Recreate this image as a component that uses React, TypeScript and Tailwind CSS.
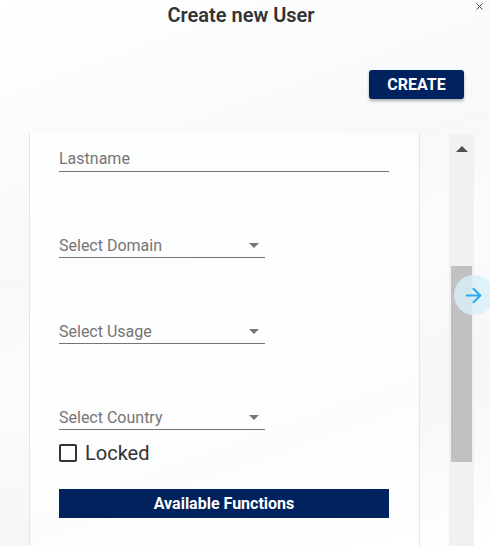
import { ArrowRight, X } from "lucide-react";

function SelectField({ label }: { label: string }) {
  return (
    <div className="w-[206px] h-[24px] border-b border-[#757575] flex items-center justify-between">
      <span className="text-[16px] text-[#757575]">{label}</span>
      <span className="mr-[6px] w-0 h-0 border-l-[5px] border-r-[5px] border-t-[5px] border-l-transparent border-r-transparent border-t-[#757575]" />
    </div>
  );
}

export default function App() {
  return (
    <div
      className="relative w-[490px] h-[546px] overflow-hidden bg-[linear-gradient(160deg,#ffffff_0%,#f6f8fa_40%,#fbfcfd_55%,#f4f6f8_75%,#ffffff_100%)]"
      style={{ fontFamily: "Roboto, 'Liberation Sans', sans-serif" }}
    >
      <button className="absolute right-[5px] top-[1px] text-[#333]">
        <X className="w-[11px] h-[11px]" strokeWidth={2} />
      </button>

      <div className="h-[29px] flex items-center justify-center">
        <h1 className="text-[20px] font-semibold text-[#333] mr-[8px]">Create new User</h1>
      </div>

      <div className="flex justify-end pr-[26px] pt-[41px]">
        <button className="w-[95px] h-[29px] rounded-[3px] bg-[#00235f] text-white text-[16px] font-bold shadow-[0_2px_3px_rgba(0,0,0,0.3)]">
          CREATE
        </button>
      </div>

      <div className="flex mt-[34px] pl-[29px]">
        <div className="w-[391px] h-[420px] bg-white/70 border-x border-[#e6e6e6] pl-[29px] pt-[14px]">
          <div className="w-[330px] h-[25px] border-b border-[#757575] flex items-center">
            <span className="text-[16px] text-[#757575]">Lastname</span>
          </div>
          <div className="mt-[62px] flex flex-col gap-[62px]">
            <SelectField label="Select Domain" />
            <SelectField label="Select Usage" />
            <SelectField label="Select Country" />
          </div>
          <label className="mt-[13px] flex items-center gap-[8px]">
            <span className="w-[18px] h-[18px] rounded-[2px] border-2 border-[#333]" />
            <span className="text-[20px] text-[#333] leading-none">Locked</span>
          </label>
          <div className="mt-[26px] w-[330px] h-[29px] bg-[#00235f] flex items-center justify-center">
            <span className="text-[16px] font-bold text-white">Available Functions</span>
          </div>
        </div>

        <div className="ml-[29px] mt-[1px] w-[25px] h-[420px] bg-[#f1f1f1] flex flex-col items-center">
          <span className="mt-[12px] w-0 h-0 border-l-[6px] border-r-[6px] border-b-[6px] border-l-transparent border-r-transparent border-b-[#505050]" />
          <div className="mt-[114px] w-[21px] h-[196px] bg-[#c1c1c1]" />
        </div>
      </div>

      <div className="absolute left-[454px] top-[275px] w-[40px] h-[40px] rounded-full bg-[#d8f0fa]/80 flex items-center pl-[8px]">
        <ArrowRight className="w-[23px] h-[23px] text-[#29a9f0]" strokeWidth={2.25} />
      </div>
    </div>
  );
}
